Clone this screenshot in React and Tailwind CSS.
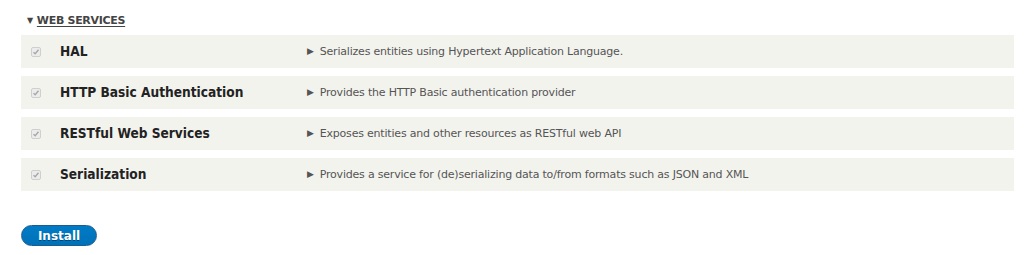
import React from "react";

const rows = [
  { name: "HAL", desc: "Serializes entities using Hypertext Application Language." },
  { name: "HTTP Basic Authentication", desc: "Provides the HTTP Basic authentication provider" },
  { name: "RESTful Web Services", desc: "Exposes entities and other resources as RESTful web API" },
  { name: "Serialization", desc: "Provides a service for (de)serializing data to/from formats such as JSON and XML" },
];

function Check() {
  return (
    <span className="w-[10px] h-[10px] rounded-[2px] border border-[#cfcfcf] bg-[#ececec] flex items-center justify-center">
      <svg width="8" height="8" viewBox="0 0 8 8">
        <path d="M1.5 4.2 L3.2 5.8 L6.5 1.8" stroke="#a8a8a8" strokeWidth="1.4" fill="none" />
      </svg>
    </span>
  );
}

export default function App() {
  return (
    <div className="w-[1024px] h-[255px] bg-white pl-[21px] pr-[10px] pt-[14px]" style={{ fontFamily: '"DejaVu Sans", Verdana, sans-serif' }}>
      <div className="flex items-center h-[14px] pl-[6px] text-[11px] font-bold text-[#444] tracking-[-0.3px]">
        <span className="text-[8px] mr-[4px] text-[#444]">▼</span>
        <span className="underline underline-offset-2">WEB SERVICES</span>
      </div>
      <div className="mt-[7px] flex flex-col gap-[8px]">
        {rows.map((r) => (
          <div key={r.name} className="h-[33px] bg-[#f3f3ee] flex items-center">
            <div className="w-[39px] pl-[10px] flex items-center"><Check /></div>
            <div className="w-[247px] text-[13.6px] font-bold text-[#222]" style={{ fontFamily: '"DejaVu Sans Condensed", "DejaVu Sans", sans-serif' }}>{r.name}</div>
            <div className="flex items-center pt-[1px] text-[11px] text-[#555] tracking-[-0.2px]">
              <span className="text-[9px] mr-[6px] text-[#555]">▶</span>
              {r.desc}
            </div>
          </div>
        ))}
      </div>
      <button className="mt-[34px] w-[76px] h-[21px] rounded-full bg-gradient-to-b from-[#007bc6] to-[#0071b8] border border-[#1e5c90] text-white text-[12px] font-bold flex items-center justify-center [text-shadow:0_1px_0_rgba(0,0,0,0.4)]">
        Install
      </button>
    </div>
  );
}
